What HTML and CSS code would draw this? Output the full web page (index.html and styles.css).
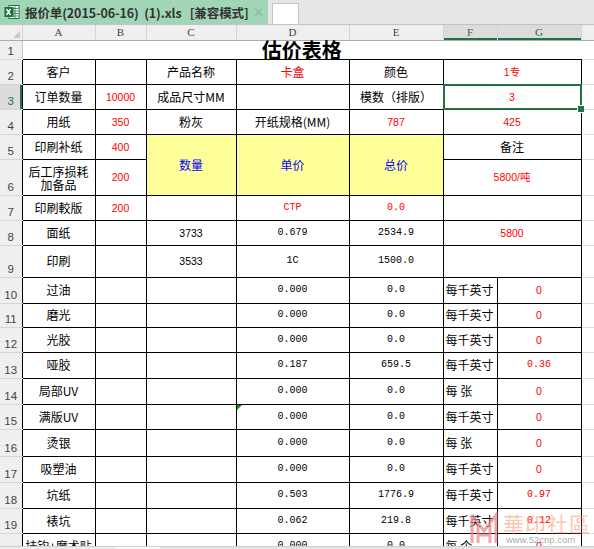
FILE: index.html
```html
<!DOCTYPE html>
<html lang="zh-CN">
<head>
<meta charset="utf-8">
<title>报价单</title>
<link rel="stylesheet" href="styles.css">
</head>
<body>
<div class="tabbar">
  <div class="tab">
    <svg class="xlicon" width="16" height="16" viewBox="0 0 16 16">
      <rect x="5" y="1.5" width="10" height="13" fill="#fff" stroke="#1e7145" stroke-width="1"/>
      <path d="M8 4.5h6M8 7h6M8 9.5h6M8 12h6M11 2v12" stroke="#1e7145" stroke-width="0.8"/>
      <rect x="0.5" y="3" width="9" height="10" fill="#1e7145"/>
      <path d="M2.5 5l4 6M6.5 5l-4 6" stroke="#fff" stroke-width="1.4"/>
    </svg>
    <span class="tabname">报价单(2015-06-16)&nbsp;&nbsp;(1).xls&nbsp;&nbsp;&nbsp;[兼容模式]</span>
    <span class="tabclose">✕</span>
  </div>
  <div class="newtab"></div>
</div>
<div class="sheet">
<table class="grid">
  <colgroup>
    <col class="w-rh"><col class="w-a"><col class="w-b"><col class="w-c"><col class="w-d"><col class="w-e"><col class="w-f"><col class="w-g"><col class="w-h">
  </colgroup>
  <thead>
    <tr class="colhead">
      <th class="corner"><span class="cornertri"></span></th><th>A</th><th>B</th><th>C</th><th>D</th><th>E</th><th class="csel">F</th><th class="csel">G</th><th class="cx"></th>
    </tr>
  </thead>
  <tbody>
    <tr><th class="rh r1h">1</th><td colspan="7" class="title">估价表格</td><td class="hx"></td></tr>
    <tr><th class="rh">2</th><td>客户</td><td></td><td>产品名称</td><td class="red">卡盒</td><td>颜色</td><td colspan="2" class="red n">1专</td><td class="hx"></td></tr>
    <tr><th class="rh rsel">3</th><td>订单数量</td><td class="red n">10000</td><td>成品尺寸MM</td><td></td><td>模数（排版）</td><td colspan="2" class="red n sel">3</td><td class="hx"></td></tr>
    <tr><th class="rh">4</th><td>用纸</td><td class="red n">350</td><td>粉灰</td><td>开纸规格(MM)</td><td class="red n">787</td><td colspan="2" class="red n">425</td><td class="hx"></td></tr>
    <tr><th class="rh">5</th><td>印刷补纸</td><td class="red n">400</td><td rowspan="2" class="yel">数量</td><td rowspan="2" class="yel">单价</td><td rowspan="2" class="yel">总价</td><td colspan="2">备注</td><td class="hx"></td></tr>
    <tr><th class="rh">6</th><td class="two">后工序损耗<br>加备品</td><td class="red n">200</td><td colspan="2" class="red n">5800/吨</td><td class="hx"></td></tr>
    <tr><th class="rh">7</th><td>印刷較版</td><td class="red n">200</td><td></td><td class="red m">CTP</td><td class="red m">0.0</td><td colspan="2"></td><td class="hx"></td></tr>
    <tr><th class="rh">8</th><td>面纸</td><td></td><td class="n">3733</td><td class="m">0.679</td><td class="m">2534.9</td><td colspan="2" class="red n">5800</td><td class="hx"></td></tr>
    <tr><th class="rh">9</th><td>印刷</td><td></td><td class="n">3533</td><td class="m">1C</td><td class="m">1500.0</td><td colspan="2"></td><td class="hx"></td></tr>
    <tr><th class="rh">10</th><td>过油</td><td></td><td></td><td class="m">0.000</td><td class="m">0.0</td><td class="unit">每千英寸</td><td class="red n">0</td><td class="hx"></td></tr>
    <tr><th class="rh">11</th><td>磨光</td><td></td><td></td><td class="m">0.000</td><td class="m">0.0</td><td class="unit">每千英寸</td><td class="red n">0</td><td class="hx"></td></tr>
    <tr><th class="rh">12</th><td>光胶</td><td></td><td></td><td class="m">0.000</td><td class="m">0.0</td><td class="unit">每千英寸</td><td class="red n">0</td><td class="hx"></td></tr>
    <tr><th class="rh">13</th><td>哑胶</td><td></td><td></td><td class="m">0.187</td><td class="m">659.5</td><td class="unit">每千英寸</td><td class="red m">0.36</td><td class="hx"></td></tr>
    <tr><th class="rh">14</th><td>局部UV</td><td></td><td></td><td class="m">0.000</td><td class="m">0.0</td><td class="unit">每&nbsp;张</td><td class="red n">0</td><td class="hx"></td></tr>
    <tr><th class="rh">15</th><td>满版UV</td><td></td><td></td><td class="m tri">0.000</td><td class="m">0.0</td><td class="unit">每千英寸</td><td class="red n">0</td><td class="hx"></td></tr>
    <tr><th class="rh">16</th><td>烫银</td><td></td><td></td><td class="m">0.000</td><td class="m">0.0</td><td class="unit">每&nbsp;张</td><td class="red n">0</td><td class="hx"></td></tr>
    <tr><th class="rh">17</th><td>吸塑油</td><td></td><td></td><td class="m">0.000</td><td class="m">0.0</td><td class="unit">每千英寸</td><td class="red n">0</td><td class="hx"></td></tr>
    <tr><th class="rh">18</th><td>坑纸</td><td></td><td></td><td class="m">0.503</td><td class="m">1776.9</td><td class="unit">每千英寸</td><td class="red m">0.97</td><td class="hx"></td></tr>
    <tr><th class="rh">19</th><td>裱坑</td><td></td><td></td><td class="m">0.062</td><td class="m">219.8</td><td class="unit">每千英寸</td><td class="red m">0.12</td><td class="hx"></td></tr>
    <tr><th class="rh">20</th><td>挂钩+魔术贴</td><td></td><td></td><td class="m">0.000</td><td class="m">0.0</td><td class="unit">每&nbsp;个</td><td class="red n">0</td><td class="hx"></td></tr>
  </tbody>
</table>
</div>
<div class="hscroll"><div class="hs-a"></div><div class="hs-b"></div><div class="hs-c"></div></div>
<div class="watermark">
  <svg class="wm-logo" width="32" height="34" viewBox="0 0 32 34">
    <path d="M4 4 L4 32 M4 4 L16 20 L28 4 L28 32 M10 14 L10 32 M22 14 L22 32 M10 24 L22 24" fill="none" stroke="#e98a8a" stroke-width="3" opacity="0.75"/>
  </svg>
  <div class="wm-text">
    <span class="wm-name">華印社區</span>
    <span class="wm-url">www.52cnp.com</span>
  </div>
</div>
</body>
</html>
```
FILE: styles.css
```css
* { box-sizing: border-box; }
html, body { margin: 0; padding: 0; }
body {
  width: 594px;
  height: 549px;
  overflow: hidden;
  background: #fff;
  font-family: "Noto Sans CJK SC", "Liberation Sans", sans-serif;
  position: relative;
}

/* ---------- tab bar ---------- */
.tabbar {
  height: 25px;
  display: flex;
  background: #e6e6e6;
  border-bottom: 1px solid #c3c3c3;
}
.tab {
  width: 268px;
  background: #a0d5b5;
  display: flex;
  align-items: center;
  padding-left: 4px;
}
.xlicon { flex: none; }
.tabname {
  margin-left: 5px;
  font-size: 12.5px;
  font-weight: 700;
  color: #333;
  white-space: nowrap;
  letter-spacing: -0.1px;
}
.tabclose {
  margin-left: auto;
  margin-right: 4px;
  color: #8fb9a0;
  font-size: 13px;
  font-family: "DejaVu Sans", sans-serif;
}
.newtab {
  width: 27px;
  height: 21px;
  margin: 3px 0 0 4px;
  background: #fff;
  border: 1px solid #c3c3c3;
  border-bottom: none;
}

/* ---------- sheet ---------- */
.sheet {
  height: 521px;
  overflow: hidden;
}
.grid {
  border-collapse: collapse;
  table-layout: fixed;
  width: 594px;
}
.w-rh { width: 22px; }
.w-a { width: 73px; }
.w-b { width: 51px; }
.w-c { width: 90px; }
.w-d { width: 113px; }
.w-e { width: 94px; }
.w-f { width: 54px; }
.w-g { width: 84px; }
.w-h { width: 13px; }

.colhead th {
  height: 15px;
  padding: 0;
  background: #efefef;
  border-right: 1px solid #d6d6d6;
  border-bottom: 1px solid #ababab;
  font-family: "Liberation Serif", serif;
  font-weight: normal;
  font-size: 11px;
  line-height: 13px;
  color: #444;
  text-align: center;
}
.colhead th.corner { position: relative; }
.cornertri {
  position: absolute;
  right: 2px;
  bottom: 2px;
  width: 0;
  height: 0;
  border-left: 7px solid transparent;
  border-bottom: 7px solid #c9c9c9;
}
.colhead th.csel {
  background: #dcdcdc;
  color: #217346;
  box-shadow: inset 0 -2px 0 #217346;
}
.colhead th.cx { border-right: none; }

tbody tr:nth-child(1) { height: 19px; }
tbody tr:nth-child(2) { height: 25px; }
tbody tr:nth-child(3) { height: 25px; }
tbody tr:nth-child(4) { height: 25px; }
tbody tr:nth-child(5) { height: 25px; }
tbody tr:nth-child(6) { height: 36px; }
tbody tr:nth-child(7) { height: 25px; }
tbody tr:nth-child(8) { height: 25px; }
tbody tr:nth-child(9) { height: 32px; }
tbody tr:nth-child(10) { height: 26px; }
tbody tr:nth-child(11) { height: 24px; }
tbody tr:nth-child(12) { height: 25px; }
tbody tr:nth-child(13) { height: 26px; }
tbody tr:nth-child(14) { height: 26px; }
tbody tr:nth-child(15) { height: 25px; }
tbody tr:nth-child(16) { height: 27px; }
tbody tr:nth-child(17) { height: 26px; }
tbody tr:nth-child(18) { height: 26px; }
tbody tr:nth-child(19) { height: 25px; }
tbody tr:nth-child(20) { height: 25px; }

th.rh {
  padding: 0 0 1px 0;
  background: #efefef;
  border-bottom: 1px solid #d6d6d6;
  vertical-align: bottom;
  text-align: center;
  font-family: "Liberation Sans", sans-serif;
  font-weight: normal;
  font-size: 11.5px;
  line-height: 13px;
  color: #444;
}
th.r1h { border-right: 1px solid #c8c8c8; }
th.rsel {
  background: #dcdcdc;
  color: #217346;
  box-shadow: inset -2px 0 0 #217346;
}

.grid td {
  border: 1px solid #000;
  padding: 0;
  text-align: center;
  vertical-align: middle;
  font-size: 12px;
  line-height: 14px;
  white-space: nowrap;
  overflow: hidden;
  color: #000;
}
.grid td.title {
  border: none;
  border-bottom: 1px solid #000;
  font-size: 20px;
  font-weight: 700;
  line-height: 18px;
  overflow: visible;
}
.grid td.hx {
  border: none;
  border-bottom: 1px solid #dadada;
}
.grid td.two { white-space: normal; line-height: 13px; padding-top: 2px; }
.grid td.red { color: #ff0000; }
.grid td.n {
  font-family: "Liberation Sans", "Noto Sans CJK SC", sans-serif;
  font-size: 10.5px;
}
.grid td.m {
  font-family: "Liberation Mono", monospace;
  font-size: 10px;
}
.grid td.yel {
  background: #ffff99;
  color: #0000ff;
}
.grid td.unit {
  text-align: left;
  padding-left: 2px;
}
.grid td.sel { position: relative; overflow: visible; }
.grid td.sel::after {
  content: "";
  position: absolute;
  left: -1px;
  top: -1px;
  right: -1px;
  bottom: -1px;
  border: 2px solid #217346;
}
.grid td.sel::before {
  content: "";
  position: absolute;
  right: -4px;
  bottom: -4px;
  width: 6px;
  height: 6px;
  background: #217346;
  border: 1px solid #fff;
  z-index: 2;
}
.grid td.tri { position: relative; overflow: visible; }
.grid td.tri::before {
  content: "";
  position: absolute;
  left: 0;
  top: 0;
  width: 0;
  height: 0;
  border-top: 5px solid #118a1b;
  border-right: 5px solid transparent;
}

/* ---------- bottom scrollbar strip ---------- */
.hscroll {
  height: 3px;
  display: flex;
  background: #e3e3e3;
  border-top: 1px solid #cfcfcf;
}
.hs-a { width: 115px; background: #ececec; }
.hs-b { width: 45px; background: #fafafa; }
.hs-c { flex: 1; background: #e3e3e3; }

/* ---------- watermark ---------- */
.watermark {
  position: absolute;
  left: 468px;
  top: 511px;
  display: flex;
  align-items: flex-start;
  gap: 3px;
  pointer-events: none;
}
.wm-text {
  display: flex;
  flex-direction: column;
  align-items: flex-start;
}
.wm-name {
  font-family: "Noto Sans CJK TC", "Noto Sans CJK SC", sans-serif;
  font-size: 21px;
  line-height: 24px;
  color: rgba(240, 150, 110, 0.55);
  letter-spacing: 1px;
}
.wm-url {
  font-family: "Liberation Sans", sans-serif;
  font-size: 9.5px;
  line-height: 10px;
  color: rgba(130, 130, 130, 0.7);
  margin-left: 3px;
}
```
